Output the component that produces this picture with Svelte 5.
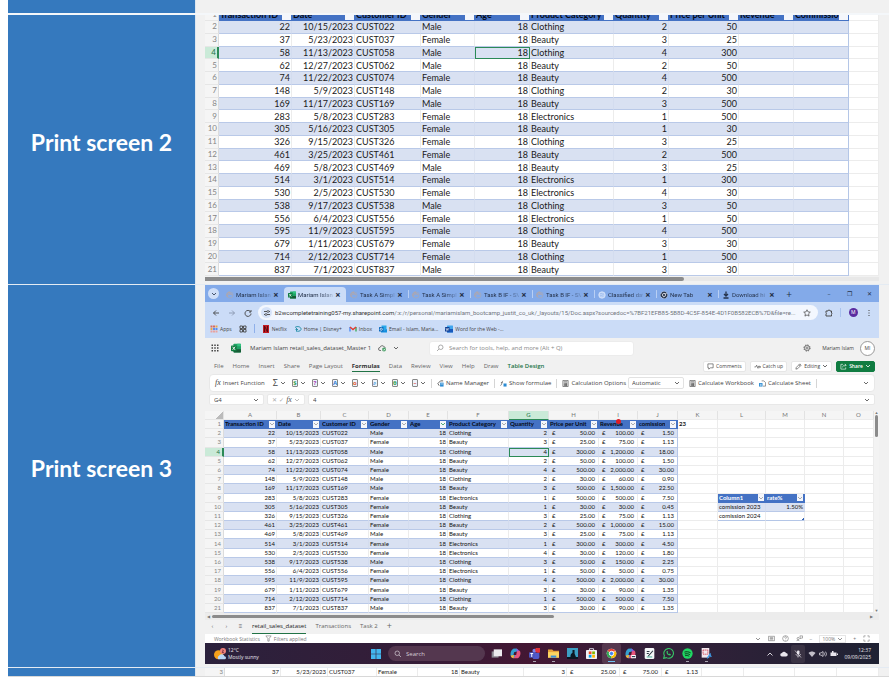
<script>
  const raw = [
    [22, '10/15', 'Male', 'Clothing', 2, 50, '100.00', '1.50'],
    [37, '5/23', 'Female', 'Beauty', 3, 25, '75.00', '1.13'],
    [58, '11/13', 'Male', 'Clothing', 4, 300, '1,200.00', '18.00'],
    [62, '12/27', 'Male', 'Beauty', 2, 50, '100.00', '1.50'],
    [74, '11/22', 'Female', 'Beauty', 4, 500, '2,000.00', '30.00'],
    [148, '5/9', 'Male', 'Clothing', 2, 30, '60.00', '0.90'],
    [169, '11/17', 'Male', 'Beauty', 3, 500, '1,500.00', '22.50'],
    [283, '5/8', 'Female', 'Electronics', 1, 500, '500.00', '7.50'],
    [305, '5/16', 'Female', 'Beauty', 1, 30, '30.00', '0.45'],
    [326, '9/15', 'Female', 'Clothing', 3, 25, '75.00', '1.13'],
    [461, '3/25', 'Female', 'Beauty', 2, 500, '1,000.00', '15.00'],
    [469, '5/8', 'Male', 'Beauty', 3, 25, '75.00', '1.13'],
    [514, '3/1', 'Female', 'Electronics', 1, 300, '300.00', '4.50'],
    [530, '2/5', 'Female', 'Electronics', 4, 30, '120.00', '1.80'],
    [538, '9/17', 'Male', 'Clothing', 3, 50, '150.00', '2.25'],
    [556, '6/4', 'Female', 'Electronics', 1, 50, '50.00', '0.75'],
    [595, '11/9', 'Female', 'Clothing', 4, 500, '2,000.00', '30.00'],
    [679, '1/11', 'Female', 'Beauty', 3, 30, '90.00', '1.35'],
    [714, '2/12', 'Female', 'Clothing', 1, 500, '500.00', '7.50'],
    [837, '7/1', 'Male', 'Beauty', 3, 30, '90.00', '1.35']
  ];
  const rows = raw.map(([id, day, gender, category, qty, price, revenue, commission], i) => ({
    n: i + 2,
    id,
    date: day + '/2023',
    customer: 'CUST' + String(id).padStart(3, '0'),
    gender,
    category,
    qty,
    price,
    revenue,
    commission
  }));

  const baseHeads = ['Transaction ID', 'Date', 'Customer ID', 'Gender', 'Age', 'Product Category', 'Quantity', 'Price per Unit', 'Revenue'];
  const letters = 'ABCDEFGHIJKLMNO'.split('');

  const tabs = [
    { icon: 'loading', text: 'Mariam Islan' },
    { icon: 'excel', text: 'Mariam Islan', active: true },
    { icon: 'loading', text: 'Task A Simpl' },
    { icon: 'loading', text: 'Task A Simpl' },
    { icon: 'loading', text: 'Task B IF - SV' },
    { icon: 'loading', text: 'Task B IF - SV' },
    { icon: 'globe', text: 'Classified dat' },
    { icon: 'chrome', text: 'New Tab' },
    { icon: 'download', text: 'Download hi' }
  ];
  const bookmarks = [
    ['netflix', 'Netflix'],
    ['disney', 'Home | Disney+'],
    ['gmail', 'Inbox'],
    ['outlook', 'Email - Islam, Maria...'],
    ['word', 'Word for the Web -...']
  ];
  const menus = ['File', 'Home', 'Insert', 'Share', 'Page Layout', 'Formulas', 'Data', 'Review', 'View', 'Help', 'Draw', 'Table Design'];
  const books = [
    ['#2f9e52', '$'],
    ['#a43fb5', '?'],
    ['#2b7cd3', 'A'],
    ['#e0603a', 'o'],
    ['#2b8bd3', '⌕'],
    ['#2f9e52', 'θ'],
    ['#d9534f', '–']
  ];
  const apps = ['tasks', 'copilot', 'teams', 'folder', 'kindle', 'store', 'chrome', 'copilot2', 'journal', 'whatsapp', 'spotify', 'snip'];
  const running = ['teams', 'folder', 'chrome', 'spotify', 'snip'];
</script>

{#snippet chev()}
  <svg class="chev" viewBox="0 0 6 6" aria-hidden="true"><path d="M1 2l2 2 2-2" fill="none" stroke="currentColor" stroke-width=".8" /></svg>
{/snippet}

{#snippet icon(name)}
  <svg class="ico i-{name}" viewBox="0 0 16 16" aria-hidden="true" fill="none" stroke="currentColor" stroke-width="1.4">
    {#if name === 'loading'}
      <circle cx="8" cy="8" r="6" stroke="#a9a9b4" /><path d="M3 12A6 6 0 0 1 8 2M5 8a3 3 0 0 1 6 0" stroke="#c9a58d" />
    {:else if name === 'globe'}
      <circle cx="8" cy="8" r="6.5" fill="#c3d7f7" stroke="#dce8fb" /><path d="M4 6c3-3 5 2 8 0M4 10c3-2 5 1 7 0" stroke="#91b2ea" />
    {:else if name === 'excel'}
      <rect x="4" y="1" width="12" height="14" rx="1" fill="#21a366" stroke="none" /><path d="M10 1h5a1 1 0 0 1 1 1v3h-6z" fill="#33c481" stroke="none" /><path d="M4 10h12v4a1 1 0 0 1-1 1H5a1 1 0 0 1-1-1z" fill="#185c37" stroke="none" /><rect x="0" y="4" width="9" height="9" rx="1" fill="#107c41" stroke="none" /><path d="M2.500 6l4 5M6.500 6l-4 5" stroke="#fff" />
    {:else if name === 'word'}
      <rect x="4" y="1" width="12" height="14" rx="1" fill="#41a5ee" stroke="none" /><path d="M4 8h12v6a1 1 0 0 1-1 1H5a1 1 0 0 1-1-1z" fill="#185abd" stroke="none" /><rect x="0" y="4" width="9" height="9" rx="1" fill="#103f91" stroke="none" /><path d="M2 6l1.200 5L4.500 7l1.300 4L7 6" stroke="#fff" stroke-width="1" />
    {:else if name === 'outlook'}
      <rect x="5" y="1" width="10" height="10" fill="#28a8ea" stroke="none" /><path d="M4 8l6 3 6-3v7H4z" fill="#1490df" stroke="none" /><rect x="0" y="4" width="9" height="9" rx="1" fill="#0f6cbd" stroke="none" /><circle cx="4.500" cy="8.500" r="2.200" stroke="#fff" />
    {:else if name === 'netflix'}
      <rect x="2" y="0" width="12" height="16" fill="#c11a22" stroke="none" /><path d="M5 2v12M11 2v12M5 2l6 12" stroke="#5c0b12" stroke-width="2" />
    {:else if name === 'disney'}
      <path d="M2 5c5-4 13-1 12 4-1 4-7 4-9 3M5 6v7M3 9h5" stroke="#2d92ac" stroke-width="2" />
    {:else if name === 'gmail'}
      <path d="M2 13V4" stroke="#4285f4" stroke-width="2.600" /><path d="M14 13V4" stroke="#34a853" stroke-width="2.600" /><path d="M2 4l6 5 6-5" stroke="#e23c31" stroke-width="2.800" />
    {:else if name === 'chrome'}
      <circle cx="8" cy="8" r="7" fill="#fff" stroke="none" /><path d="M8 8L2 4.300A7 7 0 0 1 14.300 5H8z" class="c1" stroke="none" /><path d="M8 8l6.300-3A7 7 0 0 1 7.500 15z" class="c2" stroke="none" /><path d="M8 8l-.500 7A7 7 0 0 1 2 4.300z" class="c3" stroke="none" /><circle cx="8" cy="8" r="3.200" class="c4" stroke="#fff" />
    {:else if name === 'download'}
      <path d="M8 1v8M4 6l4 4 4-4M3 14h10" stroke-width="2.600" />
    {:else if name === 'back'}
      <path d="M14 8H3M8 3L3 8l5 5" stroke-width="1.800" />
    {:else if name === 'forward'}
      <path d="M2 8h11M8 3l5 5-5 5" stroke-width="1.500" />
    {:else if name === 'reload'}
      <path d="M13 5.500A6 6 0 1 0 14 9M14 2v4h-4" stroke-width="1.800" />
    {:else if name === 'tune'}
      <path d="M2 5h6M12 5h2M2 11h2M8 11h6" stroke-width="1.800" /><circle cx="10" cy="5" r="2" /><circle cx="6" cy="11" r="2" />
    {:else if name === 'star'}
      <path d="M8 1.500l2 4.300 4.600.500-3.400 3.200.900 4.700L8 11.900l-4.100 2.300.900-4.700L1.400 6.300 6 5.800z" />
    {:else if name === 'puzzle'}
      <path d="M2 4h4a2 2 0 0 1 4 0h3v4a2 2 0 0 1 0 3v3H2v-4a2 2 0 0 0 0-3z" stroke-width="1.900" />
    {:else if name === 'dots'}
      <path d="M7 2h2v2H7zM7 7h2v2H7zM7 12h2v2H7z" fill="currentColor" stroke="none" />
    {:else if name === 'apps'}
      <path d="M1 1h4v4H1zM6 1h4v4H6z" fill="#d9685a" stroke="none" /><path d="M11 1h4v4h-4zM1 6h4v4H1z" fill="#e5a54b" stroke="none" /><path d="M6 6h4v4H6zM11 6h4v4h-4z" fill="#5b8def" stroke="none" /><path d="M1 11h4v4H1zM6 11h4v4H6zM11 11h4v4h-4z" fill="#e9a3a0" stroke="none" />
    {:else if name === 'grid'}
      <path d="M2 2h5v5H2zM9 2h5v5H9zM2 9h5v5H2zM9 9h5v5H9z" stroke-width="1.800" />
    {:else if name === 'waffle'}
      <path d="M1 1h3v3H1zM6.500 1h3v3h-3zM12 1h3v3h-3zM1 6.500h3v3H1zM6.500 6.500h3v3h-3zM12 6.500h3v3h-3zM1 12h3v3H1zM6.500 12h3v3h-3zM12 12h3v3h-3z" fill="currentColor" stroke="none" />
    {:else if name === 'cloudok'}
      <path d="M6 13H4a3 3 0 0 1 0-6 4.500 4.500 0 0 1 8.500-1A3 3 0 0 1 15 8" /><circle cx="12" cy="11" r="4" fill="#4fa36c" stroke="none" /><path d="M10 11l1.500 1.500L14 10" stroke="#fff" />
    {:else if name === 'search'}
      <circle cx="9.500" cy="6.500" r="4.500" /><path d="M6 10l-4 4" />
    {:else if name === 'gear'}
      <circle cx="8" cy="8" r="6.200" stroke-width="1.600" stroke-dasharray="2.600 2.270" /><circle cx="8" cy="8" r="5" stroke-width="1.200" /><circle cx="8" cy="8" r="2" stroke-width="1.200" />
    {:else if name === 'comment'}
      <path d="M2 2h12v9H8l-4 3v-3H2z" />
    {:else if name === 'catch'}
      <path d="M1 9h3l2-4 3 7 2-5 1 2h3M12 6l3 3-3 3" />
    {:else if name === 'pencil'}
      <path d="M2 14l1-4 8-8 3 3-8 8zM9 4l3 3" />
    {:else if name === 'share'}
      <path d="M7 3H2v11h11v-4M6 10c0-4 3-5 8-5M11 2l3 3-3 3" />
    {:else if name === 'tag'}
      <path d="M2 8l6-6h6M2 8l3 5" stroke="#555" stroke-width="2" /><path d="M7 6h8v9H7z" fill="#2b8bd3" stroke="none" /><path d="M8 9h6" stroke="#fff" />
    {:else if name === 'calc'}
      <path d="M2 1h12v14H2z" /><path d="M4 4h8M4 7h8M4 10h8M4 13h8M7 7v7M10 7v7" />
    {:else if name === 'calcsheet'}
      <path d="M6 2h5l4 4v8H9" stroke="#555" /><path d="M0 7h8v8H0z" fill="#2b8bd3" stroke="none" /><path d="M2 10h4M2 13h4" stroke="#fff" />
    {:else if name === 'fxcheck'}
      <path d="M1 13c3 0 3-11 6-11M2 6h4" /><path d="M8 8h7v7H8z" fill="#2b8bd3" stroke="none" />
    {:else if name === 'funnel'}
      <path d="M2 2h12L9.500 8v6h-3V8z" />
    {:else if name === 'keyboard'}
      <path d="M1 3h14v10H1zM4 6h8M4 8h8M4 11h8" />
    {:else if name === 'help'}
      <circle cx="8" cy="8" r="6.500" /><path d="M6 6c0-3 4-3 4 0 0 1.500-2 1.500-2 3M8 11v1.500" />
    {:else if name === 'feedback'}
      <circle cx="5" cy="8" r="2.500" /><path d="M1 14c1-3 6-3 7 0M9 2h6v5h-3l-2 2z" />
    {:else if name === 'full'}
      <path d="M2 6V2h4M10 2h4v4M14 10v4h-4M6 14H2v-4" />
    {:else if name === 'weather'}
      <circle cx="6" cy="9" r="6" fill="#f6a01a" stroke="none" /><path d="M6 15a3 3 0 0 1 1-5 4 4 0 0 1 7 1 2 2 0 0 1 0 4z" fill="#b9d5f5" stroke="none" /><circle cx="12" cy="4" r="4" fill="#f0827c" stroke="none" /><path d="M11 3c1-1 2 0 1 1l-1 2h2" stroke="#5b1d2a" stroke-width="1" />
    {:else if name === 'windows'}
      <path d="M0 0h7.500v7.500H0zM8.500 0H16v7.500H8.500zM0 8.500h7.500V16H0zM8.500 8.500H16V16H8.500z" fill="#43b7ee" stroke="none" />
    {:else if name === 'tasks'}
      <rect x="1" y="5" width="10" height="9" fill="#8b8791" stroke="none" /><rect x="4" y="2" width="12" height="10" fill="#eceaee" stroke="none" />
    {:else if name === 'copilot' || name === 'copilot2'}
      <path d="M5 1h5l2 4-3 8-4 2-4-4z" fill="#2a9be0" stroke="none" /><path d="M5 1h5l-4 9-5 1c-1-4 1-9 4-10z" fill="#35a0d0" stroke="none" /><path d="M10 4h4c3 3 0 11-4 11H5l2-3z" fill="#e8547c" stroke="none" /><path d="M1 11l5-1-1 5c-2 0-4-2-4-4z" fill="#f3b53a" stroke="none" /><path d="M9 1c3 0 3 3 5 3l-4 1z" fill="#8a5be0" stroke="none" /><path d="M6 6l4-1-1 5H5z" fill="#431733" stroke="none" />
      {#if name === 'copilot2'}<rect x="9" y="10" width="7" height="5" rx="1" fill="#fff" stroke="none" /><path d="M10 12.500h5" stroke="#26334d" stroke-width="1.600" />{/if}
    {:else if name === 'teams'}
      <circle cx="8" cy="4" r="3" fill="#7b83eb" stroke="none" /><path d="M4 7h11v4a5 5 0 0 1-10 2z" fill="#5059c9" stroke="none" /><rect x="0" y="6" width="8" height="8" rx="1" fill="#4b53bc" stroke="none" /><path d="M2 8h4M4 8v5" stroke="#fff" /><circle cx="13" cy="3" r="4" fill="#e3323a" stroke="none" />
    {:else if name === 'folder'}
      <path d="M0 2h6l2 2h8v10H0z" fill="#e8a33a" stroke="none" /><path d="M0 6h16v8H0z" fill="#fcd462" stroke="none" /><path d="M4 11h8v3H4z" fill="#3a8fdc" stroke="none" />
    {:else if name === 'kindle'}
      <rect width="16" height="16" fill="#3c9fc4" stroke="none" /><path d="M0 13h16v3H0zM5 13c0-3 1-5 3-6V3h3v5l2 5z" fill="#0c1722" stroke="none" />
    {:else if name === 'store'}
      <path d="M5 4V1h6v3" stroke="#dcdce6" /><rect x="0" y="3" width="16" height="13" rx="1" fill="#f1f1f5" stroke="none" /><path d="M4 5h4v4H4z" fill="#f25022" stroke="none" /><path d="M9 5h4v4H9z" fill="#7fba00" stroke="none" /><path d="M4 10h4v4H4z" fill="#00a4ef" stroke="none" /><path d="M9 10h4v4H9z" fill="#ffb900" stroke="none" />
    {:else if name === 'journal'}
      <rect x="1" y="0" width="14" height="16" rx="2" fill="#f4f6f8" stroke="none" /><path d="M4 5h4M4 8h3M6 12l7-8" stroke="#2a3440" stroke-width="1.600" /><path d="M4 13h8" stroke="#3fa58f" />
    {:else if name === 'whatsapp'}
      <path d="M1 15l1-4a7 7 0 1 1 3 3z" stroke="#37c466" stroke-width="1.600" /><path d="M5 5c0 4 2 6 6 6l.500-2-2-1-1 1-2-2 1-1-1-2z" fill="#37c466" stroke="none" />
    {:else if name === 'spotify'}
      <circle cx="8" cy="8" r="7.500" fill="#1fd662" stroke="none" /><path d="M3.500 6c3-1 6-.700 9 1M4 8.700c3-.800 5-.500 7.500 1M4.500 11.200c2-.500 4-.400 6 .800" stroke="#10331d" />
    {:else if name === 'snip'}
      <rect x="1" y="0" width="11" height="14" fill="#f2e8ee" stroke="none" /><path d="M3 3h7v6H3z" stroke="#d14b5c" stroke-dasharray="2 1" /><path d="M9 15l5-7M12 9l3 4" stroke="#3d9be8" stroke-width="2" />
    {:else if name === 'up'}
      <path d="M3 11l5-5 5 5" stroke-width="1.800" />
    {:else if name === 'cloud'}
      <path d="M4 13a3.500 3.500 0 0 1 0-7 4.500 4.500 0 0 1 8 0 3.500 3.500 0 0 1 0 7z" fill="currentColor" stroke="none" />
    {:else if name === 'mic'}
      <rect x="6" y="1" width="5" height="8" rx="2" fill="currentColor" stroke="none" /><path d="M4 8c0 5 9 5 9 0M8 12v3M2 1l12 14" />
    {:else if name === 'wifi'}
      <path d="M1 6c4-4 10-4 14 0l-7 8z" fill="currentColor" stroke="none" opacity=".8" />
    {:else if name === 'sound'}
      <path d="M1 6h3l4-3v10l-4-3H1zM10 5c2 2 2 4 0 6M12 3c4 3 4 7 0 10" />
    {:else if name === 'battery'}
      <path d="M1 5h12v7H1zM14 7h2v3h-2zM4 2h3v4H4z" fill="currentColor" stroke="none" />
    {/if}
  </svg>
{/snippet}

{#snippet head(text, light = false)}
  <th scope="col" class="h" class:light><span>{text}</span><button class="filter" class:sorted={text === 'Age'} aria-label="Filter {text}">{@render chev()}</button></th>
{/snippet}

{#snippet money(v)}
  <td class="money"><span>£</span><span>{v}</span></td>
{/snippet}

<main>
  <section class="band top"><div class="label"></div><div class="shot"></div></section>

  <section class="band">
    <h2 class="label">Print screen 2</h2>
    <div class="shot">
      <div class="clip">
        <table class="sheet large">
          <thead>
            <tr><th class="n">1</th>{#each baseHeads as t}{@render head(t)}{/each}{@render head('Commissio')}<td class="out"></td></tr>
          </thead>
          <tbody>
            {#each rows as r}
              <tr class:odd={r.n % 2 === 0} class:cur={r.n === 4}>
                <th scope="row" class="n">{r.n}</th>
                <td class="r">{r.id}</td><td class="r">{r.date}</td><td>{r.customer}</td><td>{r.gender}</td>
                <td class="r" class:sel={r.n === 4}>18</td><td>{r.category}</td><td class="r">{r.qty}</td><td class="r">{r.price}</td>
                <td></td><td class="last"></td><td class="out"></td>
              </tr>
            {/each}
          </tbody>
        </table>
      </div>
      <div class="hbar"><div></div></div>
    </div>
  </section>

  <section class="band">
    <h2 class="label">Print screen 3</h2>
    <div class="shot">
      <div class="screen">
        <div class="tabbar">
          <button class="drop" aria-label="Search tabs">{@render chev()}</button>
          <div class="tabs">
            {#each tabs as t}
              <div class="tab" class:active={t.active}>{@render icon(t.icon)}<span>{t.text}</span><button aria-label="Close tab">×</button></div>
            {/each}
          </div>
          <button class="plus" aria-label="New tab">+</button>
          <div class="win"><button aria-label="Minimise">–</button><button aria-label="Restore">❐</button><button aria-label="Close">✕</button></div>
        </div>
        <div class="nav">
          <button aria-label="Back">{@render icon('back')}</button>
          <button aria-label="Forward" class="dim">{@render icon('forward')}</button>
          <button aria-label="Reload">{@render icon('reload')}</button>
          <div class="url">
            <span class="site">{@render icon('tune')}</span>
            <span class="addr"><b>b2wcompletetraining057-my.sharepoint.com</b>/:x:/r/personal/mariamislam_bootcamp_justit_co_uk/_layouts/15/Doc.aspx?sourcedoc=%7BF21EFB85-5B8D-4C5F-854E-4D1F0B582ECB%7D&amp;file=re...</span>
            {@render icon('star')}
          </div>
          <div class="navend">{@render icon('puzzle')}<i></i><span class="me">M</span>{@render icon('dots')}</div>
        </div>
        <div class="marks">
          <a href="#apps">{@render icon('apps')}Apps</a>
          {@render icon('grid')}<i></i>
          {#each bookmarks as [ic, t]}<a href="#{ic}">{@render icon(ic)}{t}</a>{/each}
        </div>

        <div class="title">
          <div class="doc">{@render icon('waffle')}{@render icon('excel')}<span>Mariam Islam retail_sales_dataset_Master 1</span>{@render icon('cloudok')}{@render chev()}</div>
          <label class="find">{@render icon('search')}<input aria-label="Search" placeholder="Search for tools, help, and more (Alt + Q)" /></label>
          <div class="user">{@render icon('gear')}<span>Mariam Islam</span><span class="avatar">MI</span></div>
        </div>
        <div class="menu">
          <div class="items">{#each menus as m}<button class:on={m === 'Formulas'} class:design={m === 'Table Design'}>{m}</button>{/each}</div>
          <div class="acts">
            <button>{@render icon('comment')}Comments</button>
            <button>{@render icon('catch')}Catch up</button>
            <button>{@render icon('pencil')}Editing{@render chev()}</button>
            <button class="green">{@render icon('share')}Share{@render chev()}</button>
          </div>
        </div>
        <div class="ribbon">
          <button class="fn"><em>fx</em>Insert Function</button>
          <div class="libs">
            <button class="lib sum">Σ{@render chev()}</button>
            {#each books as [c, g]}
              <button class="lib" aria-label="Function library"><span class="book" style="color:{c}">{g}</span>{@render chev()}</button>
            {/each}
          </div>
          <i></i>
          <button>{@render icon('tag')}Name Manager</button><i></i>
          <button>{@render icon('fxcheck')}Show formulae</button><i></i>
          <label class="opt">{@render icon('calc')}Calculation Options
            <span class="pick"><select><option>Automatic</option></select>{@render chev()}</span></label>
          <button>{@render icon('calc')}Calculate Workbook</button>
          <button>{@render icon('calcsheet')}Calculate Sheet</button><i></i>
          <span class="end">{@render chev()}</span>
        </div>
        <div class="fbar">
          <label class="cellname"><input aria-label="Name box" value="G4" />{@render chev()}</label>
          <div class="fx"><span>✕</span><span>✓</span><em>fx</em>{@render chev()}</div>
          <label class="formula"><input aria-label="Formula" value="4" />{@render chev()}</label>
        </div>

        <div class="gridwrap">
          <table class="sheet small">
            <thead>
              <tr class="cols"><th class="n corner"></th>{#each letters as l}<th scope="col" class:hot={l === 'G'}>{l}</th>{/each}</tr>
            </thead>
            <tbody>
              <tr class="heads">
                <th scope="row" class="n">1</th>
                {#each baseHeads as t}{@render head(t)}{/each}{@render head('comission')}
                <td class="out over">23</td>
                {#each [1, 2, 3, 4] as _}<td class="out"></td>{/each}
              </tr>
              {#each rows as r}
                <tr class:odd={r.n % 2 === 0} class:cur={r.n === 4}>
                  <th scope="row" class="n">{r.n}</th>
                  <td class="r">{r.id}</td><td class="r">{r.date}</td><td>{r.customer}</td><td>{r.gender}</td>
                  <td class="r">18</td><td>{r.category}</td><td class="r" class:sel={r.n === 4}>{r.qty}</td>
                  {@render money(r.price + '.00')}{@render money(r.revenue)}
                  <td class="money last"><span>£</span><span>{r.commission}</span></td>
                  <td class="out"></td>
                  {#if r.n === 9}
                    {@render head('Column1', true)}{@render head('rate%', true)}
                  {:else if r.n === 10}
                    <td class="tint">comission 2023</td><td class="tint r">1.50%</td>
                  {:else if r.n === 11}
                    <td class="out foot">comission 2024</td><td class="out foot handle"></td>
                  {:else}
                    <td class="out"></td><td class="out"></td>
                  {/if}
                  <td class="out"></td><td class="out"></td>
                </tr>
              {/each}
            </tbody>
          </table>
          <div class="vbar"><span>▲</span><div></div><span>▼</span></div>
          <span class="pointer"></span>
        </div>
        <div class="hscroll"><span>◀</span><div></div><span>▶</span></div>
        <div class="sheets">
          <button class="dim">‹</button><button class="dim">›</button><button>≡</button>
          <button class="on">retail_sales_dataset</button><button>Transactions</button><button>Task 2</button><button class="add">+</button>
        </div>
        <div class="status">
          <span>Workbook Statistics</span><span class="flt">{@render icon('funnel')}Filters applied</span>
          <div class="zoom">
            {@render chev()}{@render icon('keyboard')}{@render icon('help')}{@render icon('feedback')}<span>−</span><span class="pct">100%{@render chev()}</span><span>+</span>{@render icon('full')}
          </div>
        </div>
        <div class="taskbar">
          <div class="weather">{@render icon('weather')}<div><div>12°C</div><div>Mostly sunny</div></div></div>
          <button class="start" aria-label="Start">{@render icon('windows')}</button>
          <label class="tsearch">{@render icon('search')}<input aria-label="Search" placeholder="Search" /></label>
          <div class="pins">{#each apps as a}<button aria-label={a} class:run={running.includes(a)} class:focus={a === 'chrome'}>{@render icon(a)}</button>{/each}</div>
          <div class="tray">
            {@render icon('up')}{@render icon('cloud')}<span class="micbox">{@render icon('mic')}</span>{@render icon('wifi')}{@render icon('sound')}{@render icon('battery')}
            <div class="clock"><div>12:37</div><div>09/09/2025</div></div>
          </div>
        </div>
      </div>
    </div>
  </section>

  <section class="band final">
    <div class="label"></div>
    <div class="shot">
      <table class="sheet strip">
        <tbody>
          <tr>
            <th scope="row" class="n">3</th>
            <td class="r">37</td><td class="r">5/23/2023</td><td>CUST037</td><td>Female</td><td class="r">18</td><td>Beauty</td><td class="r">3</td>
            {@render money('25.00')}{@render money('75.00')}{@render money('1.13')}
            <td></td><td></td><td></td><td></td>
          </tr>
        </tbody>
      </table>
    </div>
  </section>
</main>

<style>
  :global(body) { margin: 0; background: #fff; }
  main { margin: 0 3px 0 8px; font-family: Lato, "Open Sans", sans-serif; color: #1a1a1a; border-bottom: 1px solid #d8d8d8; }
  main * { box-sizing: border-box; }
  button, input, select { font: inherit; color: inherit; background: none; border: 0; padding: 0; margin: 0; }
  a { color: inherit; text-decoration: none; }
  i { display: block; flex: none; width: 1px; height: 9px; background: #d5d5d5; }

  .band { display: grid; grid-template-columns: 187px minmax(0, 1fr); border-bottom: 1px solid #e4ebf3; }
  .band.top { height: 15px; border-bottom: 2px solid #f4f7fa; }
  .band.final { border-bottom: 0; height: 8px; overflow: hidden; }
  .label { margin: 0; padding-bottom: 16px; display: flex; align-items: center; justify-content: center; background: #3579be; color: #fff; font-size: 23px; line-height: 28px; font-weight: 700; white-space: nowrap; }
  .top .label, .final .label { padding: 0; }
  .shot { background: #f1f1f1; padding: 0 10px 0 9px; border-left: 1px solid #dce6f0; }

  .ico { width: 8px; height: 8px; flex: none; display: block; }
  .chev { width: 6px; height: 6px; flex: none; display: block; }

  /* sheets */
  .sheet { display: block; background: #fff; }
  .sheet thead { display: block; }
  .sheet tbody { display: grid; grid-auto-rows: 1fr; }
  .sheet tr { display: grid; min-height: 0; }
  .sheet td, .sheet th { display: flex; align-items: center; min-width: 0; min-height: 0; padding: 0 1px; white-space: nowrap; font-weight: 400; overflow: hidden; border-right: 1px solid #ececec; border-bottom: 1px solid #ececec; text-align: left; }
  .sheet td.r { justify-content: flex-end; }
  .sheet th.n { justify-content: flex-end; background: #f5f5f5; color: #858585; border-right-color: #dcdcdc; border-bottom-color: #e6e6e6; }
  .sheet td:not(.out) { border-bottom-color: #b9c9e8; }
  .odd td:not(.out) { background: #d9e1f2; border-right-color: #d3dcef; }
  .sheet td.last { border-right-color: #b4c6e7; }
  .sheet th.h { background: #4472c4; border-color: #4472c4; color: #060a14; font-weight: 700; justify-content: space-between; padding-right: 0; }
  .sheet th.light { color: #fff; }
  .h span { overflow: hidden; min-width: 0; }
  .filter { flex: none; background: #f4f6fb; color: #999; display: flex; align-items: center; justify-content: center; }
  .filter.sorted { color: #2a9a55; }
  .sheet .cur .n { background: #caead8; color: #217346; border-right: 2px solid #2b8a57; }
  .sheet .sel.sel { outline: 1px solid #2b8a57; outline-offset: -1px; }
  .money { justify-content: space-between; }

  .clip { overflow: hidden; }
  .large { font-size: 9px; line-height: 11px; margin-top: -7px; }
  .large tbody { height: 255px; }
  .large thead tr { height: 13px; }
  .large tr { grid-template-columns: 14fr 73fr 63fr 66fr 54fr 55fr 84fr 55fr 70fr 55fr 55fr 30fr; }
  .large .filter { width: 9px; height: 11px; }
  .large .n { font-size: 8px; }
  .hbar { margin-top: 1px; height: 7px; border-bottom: 3px solid #f1f1f1; background: #e8e8e8; }
  .hbar div { width: 71%; height: 4px; background: #8b8b8b; border-radius: 0 3px 3px 0; }

  .small, .strip { font-size: 6px; line-height: 8px; }
  .small tr { grid-template-columns: 19fr 53fr 44fr 48fr 40fr 39fr 61fr 40fr 50fr 39fr 40fr 40fr 48fr 39fr 39fr 30fr; }
  .small tbody { height: 193px; }
  .small .cols { height: 9px; }
  .small .cols th { background: #f5f5f5; color: #777; justify-content: center; border-right-color: #e2e2e2; }
  .small .cols th.hot { background: #caead8; color: #217346; border-bottom: 1px solid #2b8a57; }
  .small .cols .corner { background: linear-gradient(315deg, #bbb 5px, #f5f5f5 5px); }
  .small .n { padding-right: 2px; }
  .small th.h { padding-right: 1px; }
  .small .filter { width: 6px; height: 7px; }
  .small .money, .strip .money { padding: 0 3px; }
  .small .over { font-weight: 700; }
  .small .tint { background: #d9e1f2; }
  .small .foot { border-bottom-color: #b4c6e7; }
  .small .handle { background: linear-gradient(315deg, #3563b5 2px, transparent 2px); }

  .strip tr { height: 9px; grid-template-columns: 20fr 56fr 47fr 49fr 41fr 42fr 64fr 43fr 53fr 42fr 40fr 42fr 51fr 42fr 42fr; }
  .sheet.strip td { border-bottom-color: #fff; }

  /* browser */
  .screen { font-family: "Open Sans", "Noto Sans", sans-serif; font-size: 6px; line-height: 8px; color: #444; margin-bottom: 3px; white-space: nowrap; }
  .tabbar { height: 17px; background: #83aae9; display: flex; align-items: center; color: #25324a; }
  .drop { width: 11px; height: 11px; margin: 0 3px; border-radius: 6px; background: #cfdef7; display: grid; place-items: center; }
  .tabs { flex: 1; min-width: 0; height: 100%; display: flex; font-family: Roboto, sans-serif; }
  .tab { flex: 1; min-width: 0; display: flex; align-items: center; gap: 2px; padding: 0 5px 0 4px; margin: 2px 0 0; height: 15px; border-radius: 4px 4px 0 0; }
  .tab + .tab:not(.active) { background: linear-gradient(#b8cff4, #b8cff4) 0 3px / 1px 8px no-repeat; }
  .tab.active { background: #cbdcf7; }
  .tab.active + .tab.tab { background: none; }
  .tab span { flex: 1; min-width: 0; mask-image: linear-gradient(90deg, #000 65%, #0003); }
  .tab button { width: 6px; font-size: 9px; font-weight: 700; }
  .plus { width: 18px; font-size: 10px; }
  .win { width: 81px; padding-left: 21px; display: flex; }
  .win button { flex: 1; }

  .nav { height: 21px; background: #cbdcf7; display: flex; align-items: center; }
  .nav > button { width: 16px; display: flex; justify-content: center; }
  .nav > button:first-child { margin-left: 3px; }
  .nav .dim { color: #7f8ba3; }
  .url { flex: 1; min-width: 0; height: 15px; margin-left: 2px; padding: 0 7px 0 3px; border-radius: 8px; background: #f3f7fe; display: flex; align-items: center; gap: 3px; }
  .site { width: 11px; height: 11px; border-radius: 6px; background: #d6e3f9; display: grid; place-items: center; }
  .addr { flex: 1; min-width: 0; color: #70757d; font-family: Roboto, sans-serif; }
  .addr b { font-weight: 400; color: #333; }
  .navend { width: 61px; padding: 0 6px 0 7px; display: flex; align-items: center; justify-content: space-between; }
  .navend i { background: #a9c2ee; }
  .me { width: 9px; height: 9px; border-radius: 5px; background: #5a2ca0; color: #fff; font-size: 5px; line-height: 9px; text-align: center; }

  .marks { height: 15px; padding: 0 5px 4px; background: #cbdcf7; display: flex; align-items: center; gap: 7px; font-size: 5px; }
  .marks a { display: flex; align-items: center; gap: 2px; }
  .marks i { background: #8fb0ea; }

  /* spreadsheet app */
  .title { height: 20px; display: grid; grid-template-columns: 224px 205px minmax(0, 1fr); align-items: center; }
  .doc { display: flex; align-items: center; gap: 7px; padding-left: 6px; }
  .doc .i-excel { width: 10px; height: 10px; margin: 0 2px 0 5px; }
  .find { height: 15px; display: flex; align-items: center; gap: 5px; padding: 0 6px; background: #fff; border: 1px solid #ececec; border-radius: 3px; color: #888; }
  .find input { flex: 1; min-width: 0; }
  input::placeholder { color: inherit; opacity: 1; }
  .user { display: flex; align-items: center; justify-content: flex-end; gap: 6px; padding-right: 4px; font-size: 5px; }
  .avatar { width: 15px; height: 15px; border: 1px solid #999; border-radius: 8px; background: #fff; line-height: 13px; text-align: center; }
  .user .i-gear { margin-right: 5px; }

  .menu { height: 16px; display: flex; justify-content: space-between; align-items: center; padding: 0 4px 0 9px; }
  .items { display: flex; gap: 9px; }
  .items button { height: 12px; border-bottom: 1px solid transparent; color: #666; }
  .items .on { font-weight: 700; color: #333; border-color: #217346; }
  .items .design { font-weight: 600; color: #217346; }
  .acts { display: flex; gap: 4px; font-size: 5px; }
  .acts button { height: 11px; padding: 0 3px; display: flex; align-items: center; gap: 2px; background: #fff; border: 1px solid #e6e6e6; border-radius: 2px; }
  .acts .green { background: #107c41; border-color: #107c41; color: #fff; font-weight: 600; }
  .acts .ico { width: 7px; height: 7px; }

  .ribbon { height: 18px; margin: 0 4px 1px; padding: 0 5px; background: #fff; border: 1px solid #e8e8e8; border-radius: 4px; display: flex; align-items: center; gap: 5px; }
  .libs { display: flex; align-items: center; gap: 6px; }
  .ribbon button { display: flex; align-items: center; gap: 2px; }
  .ribbon .ico { width: 7px; height: 7px; }
  em { font-family: "Liberation Serif", serif; font-size: 8px; }
  .ribbon .sum { font-size: 9px; margin-left: 3px; }
  .book { width: 6px; height: 8px; border: 1px solid #888; border-radius: 1px; background: #eef4fb; font-size: 6px; line-height: 6px; text-align: center; font-weight: 700; }
  .opt { display: flex; align-items: center; gap: 2px; }
  .pick { width: 56px; height: 12px; padding: 0 3px; border: 1px solid #e2e2e2; border-radius: 2px; display: flex; align-items: center; }
  .pick select { appearance: none; flex: 1; }
  .end { margin-left: auto; }

  .fbar { height: 18px; padding: 1px 4px 6px; display: flex; gap: 3px; }
  .fbar > * { height: 11px; background: #fff; border: 1px solid #e8e8e8; border-radius: 2px; display: flex; align-items: center; padding: 0 4px; }
  .cellname { width: 55px; }
  .cellname input, .formula input { flex: 1; min-width: 0; }
  .fx { width: 38px; justify-content: space-between; color: #aaa; }
  .fx em { color: #555; }
  .formula { flex: 1; }

  .gridwrap { position: relative; display: grid; grid-template-columns: minmax(0, 1fr) 5px; font-family: Lato, sans-serif; color: #111; }
  .vbar { background: #f3f3f3; display: flex; flex-direction: column; align-items: center; font-size: 4px; line-height: 4px; color: #777; }
  .vbar div { width: 3px; height: 22px; background: #8b8b8b; border-radius: 2px; margin-bottom: auto; }
  .pointer { position: absolute; left: 61%; top: 8px; width: 5px; height: 5px; border-radius: 3px; background: #e01b24; }

  .hscroll { height: 7px; background: #ececec; display: flex; align-items: center; padding: 0 2px; font-size: 4px; line-height: 4px; color: #777; gap: 2px; }
  .hscroll div { width: 51%; height: 3px; border-radius: 2px; background: #8b8b8b; margin-right: auto; }
  .hscroll span:last-child { margin-right: 4px; }
  .sheets { height: 14px; padding: 0 5px; display: flex; align-items: center; gap: 9px; }
  .sheets button { height: 14px; border-bottom: 1px solid transparent; color: #666; min-width: 5px; padding-bottom: 2px; }
  .sheets .on { color: #222; border-color: #217346; }
  .sheets .add { font-size: 9px; }
  .status { height: 9px; background: #fff; display: flex; align-items: center; gap: 5px; padding: 0 9px; color: #777; font-size: 5px; }
  .flt { display: flex; align-items: center; gap: 2px; }
  .status .ico { width: 7px; height: 7px; }
  .zoom { margin-left: auto; display: flex; align-items: center; gap: 7px; }
  .pct { display: flex; align-items: center; border: 1px solid #e6e6e6; padding: 0 2px; gap: 2px; height: 8px; }

  .taskbar { height: 21px; display: flex; align-items: center; background: linear-gradient(90deg, #2b213c, #341d38 30%, #431733 48%, #35203a 65%, #1f2233); color: #e9e6ee; }
  .weather { flex: 0 0 161px; padding-left: 9px; display: flex; align-items: center; gap: 2px; line-height: 7px; font-size: 5px; }
  .weather .ico { width: 12px; height: 12px; }
  .start { width: 20px; display: flex; justify-content: center; }
  .start .ico { width: 10px; height: 10px; }
  .tsearch { width: 97px; height: 15px; margin: 0 2px; padding: 0 6px; display: flex; align-items: center; gap: 4px; border-radius: 8px; background: #54374f; color: #d5cdd6; }
  .tsearch input { flex: 1; min-width: 0; }
  .tsearch .ico { transform: scaleX(-1); }
  .pins { width: 229px; height: 100%; display: grid; grid-template-columns: repeat(12, 1fr); }
  .pins button { display: grid; place-items: center; border-radius: 3px; }
  .pins .ico { width: 11px; height: 11px; }
  .pins .run { background: linear-gradient(#a9a3b0, #a9a3b0) 50% 18px / 3px 1px no-repeat; }
  .pins .focus { background: linear-gradient(#6fc3f2, #6fc3f2) 50% 18px / 7px 1px no-repeat, #56384f; }
  .tray { margin-left: auto; padding-right: 8px; display: flex; align-items: center; gap: 3px; line-height: 7px; }
  .tray .i-up { margin-right: 3px; }
  .micbox { width: 14px; height: 18px; display: grid; place-items: center; border-radius: 2px; background: #3a3344; }
  .clock { text-align: right; font-size: 5px; margin-left: 3px; }

  .c1 { fill: #ea4335; }
  .c2 { fill: #fbbc05; }
  .c3 { fill: #34a853; }
  .c4 { fill: #4285f4; }
  .tab .c1, .tab .c2, .tab .c3, .tab .c4 { fill: #2b3850; }
</style>
